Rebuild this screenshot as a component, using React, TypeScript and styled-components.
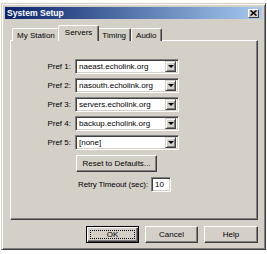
import React from 'react';
import styled, { createGlobalStyle } from 'styled-components';

const GlobalStyle = createGlobalStyle`
  body {
    margin: 0;
    background: #ffffff;
    font-family: "Liberation Sans", Arial, sans-serif;
    font-size: 8px;
    color: #000;
  }
`;

const face = '#d4d0c8';

const Window = styled.div`
  box-sizing: border-box;
  margin: 3px 0 0 1px;
  width: 265px;
  height: 247px;
  padding: 3px;
  background: ${face};
  border: 1px solid;
  border-color: ${face} #404040 #404040 ${face};
  box-shadow: inset 1px 1px #fff, inset -1px -1px #808080;
  display: flex;
  flex-direction: column;
`;

const TitleBar = styled.div`
  height: 12px;
  display: flex;
  align-items: center;
  justify-content: space-between;
  padding-left: 2px;
  background: linear-gradient(to right, #0a246a, #a6caf0);
`;

const Title = styled.span`
  color: #fff;
  font-weight: bold;
  font-size: 8.6px;
`;

const CloseButton = styled.div`
  box-sizing: border-box;
  width: 11px;
  height: 9px;
  margin-right: 3px;
  background: ${face};
  border: 1px solid;
  border-color: #fff #404040 #404040 #fff;
  display: flex;
  align-items: center;
  justify-content: center;
`;

const Body = styled.div`
  display: flex;
  flex-direction: column;
  padding: 7px 4px 0 5px;
`;

const TabStrip = styled.div`
  display: flex;
  align-items: flex-end;
  height: 15px;
  padding-left: 2px;
  position: relative;
  z-index: 1;
  margin-bottom: -1px;
`;

const Tab = styled.div<{ $active?: boolean }>`
  box-sizing: border-box;
  height: ${p => (p.$active ? 16 : 13)}px;
  padding: ${p => (p.$active ? '0 6px' : '0 4px')};
  margin: ${p => (p.$active ? '0 -2px' : '0')};
  display: flex;
  align-items: center;
  padding-bottom: ${p => (p.$active ? 2 : 0)}px;
  background: ${face};
  border: 1px solid;
  border-bottom: none;
  border-color: #fff #404040 transparent #fff;
  box-shadow: inset -1px 0 #808080;
  border-radius: 2px 2px 0 0;
  position: relative;
  z-index: ${p => (p.$active ? 2 : 0)};
`;

const Panel = styled.div`
  box-sizing: border-box;
  height: 180px;
  padding-top: 18px;
  background: ${face};
  border: 1px solid;
  border-color: #fff #404040 #404040 #fff;
  box-shadow: inset -1px -1px #808080;
`;

const Form = styled.div`
  display: grid;
  grid-template-columns: 60px 104px;
  column-gap: 4px;
  row-gap: 4px;
  align-items: center;
`;

const Label = styled.span`
  text-align: right;
  white-space: nowrap;
`;

const Sunken = styled.div`
  box-sizing: border-box;
  background: #fff;
  border: 1px solid;
  border-color: #808080 #fff #fff #808080;
  box-shadow: inset 1px 1px #404040, inset -1px -1px ${face};
`;

const Combo = styled(Sunken)`
  height: 15px;
  display: flex;
  align-items: center;
  padding: 2px;
  gap: 2px;
`;

const ComboText = styled.span`
  flex: 1;
  white-space: nowrap;
  overflow: hidden;
  padding-left: 1px;
`;

const ArrowButton = styled.div`
  box-sizing: border-box;
  width: 11px;
  height: 11px;
  background: ${face};
  border: 1px solid;
  border-color: ${face} #404040 #404040 ${face};
  box-shadow: inset 1px 1px #fff, inset -1px -1px #808080;
  display: flex;
  align-items: center;
  justify-content: center;
`;

const Arrow = styled.div`
  width: 0;
  height: 0;
  border-left: 3px solid transparent;
  border-right: 3px solid transparent;
  border-top: 3px solid #000;
`;

const Button = styled.div<{ $width: number; $default?: boolean }>`
  box-sizing: border-box;
  width: ${p => p.$width}px;
  height: 17px;
  display: flex;
  align-items: center;
  justify-content: center;
  background: ${face};
  border: 1px solid;
  border-color: ${p => (p.$default ? '#000' : `#fff #404040 #404040 #fff`)};
  box-shadow: ${p =>
    p.$default
      ? 'inset 1px 1px #fff, inset -1px -1px #404040, inset -2px -2px #808080'
      : 'inset -1px -1px #808080'};
  position: relative;
`;

const Focus = styled.div`
  position: absolute;
  inset: 3px;
  border: 1px dotted #000;
`;

const ResetButton = styled(Button)`
  grid-column: 2;
  margin: 1px 0 0 1px;
`;

const RetryRow = styled.div`
  grid-column: 2;
  display: flex;
  align-items: center;
  gap: 3px;
  margin: 1px 0 0 3px;
  white-space: nowrap;
  letter-spacing: -0.1px;
`;

const SmallInput = styled(Sunken)`
  width: 20px;
  height: 15px;
  padding: 2px 0 0 3px;
  letter-spacing: 0;
`;

const ButtonRow = styled.div`
  display: flex;
  justify-content: flex-end;
  gap: 6px;
  margin-top: 6px;
`;

const servers = [
  ['Pref 1:', 'naeast.echolink.org'],
  ['Pref 2:', 'nasouth.echolink.org'],
  ['Pref 3:', 'servers.echolink.org'],
  ['Pref 4:', 'backup.echolink.org'],
  ['Pref 5:', '[none]'],
];

export default function App() {
  return (
    <>
      <GlobalStyle />
      <Window>
        <TitleBar>
          <Title>System Setup</Title>
          <CloseButton>
            <svg width="7" height="6" viewBox="0 0 7 6">
              <path d="M0.5 0.5 L6.5 5.5 M6.5 0.5 L0.5 5.5" stroke="#000" strokeWidth="1.6" />
            </svg>
          </CloseButton>
        </TitleBar>
        <Body>
          <TabStrip>
            <Tab>My Station</Tab>
            <Tab $active>Servers</Tab>
            <Tab>Timing</Tab>
            <Tab>Audio</Tab>
          </TabStrip>
          <Panel>
            <Form>
              {servers.map(([label, value]) => (
                <React.Fragment key={label}>
                  <Label>{label}</Label>
                  <Combo>
                    <ComboText>{value}</ComboText>
                    <ArrowButton><Arrow /></ArrowButton>
                  </Combo>
                </React.Fragment>
              ))}
              <ResetButton $width={81}>Reset to Defaults...</ResetButton>
              <RetryRow>
                Retry Timeout (sec):
                <SmallInput>10</SmallInput>
              </RetryRow>
            </Form>
          </Panel>
          <ButtonRow>
            <Button $width={53} $default>
              <Focus />
              OK
            </Button>
            <Button $width={53}>Cancel</Button>
            <Button $width={54}>Help</Button>
          </ButtonRow>
        </Body>
      </Window>
    </>
  );
}
